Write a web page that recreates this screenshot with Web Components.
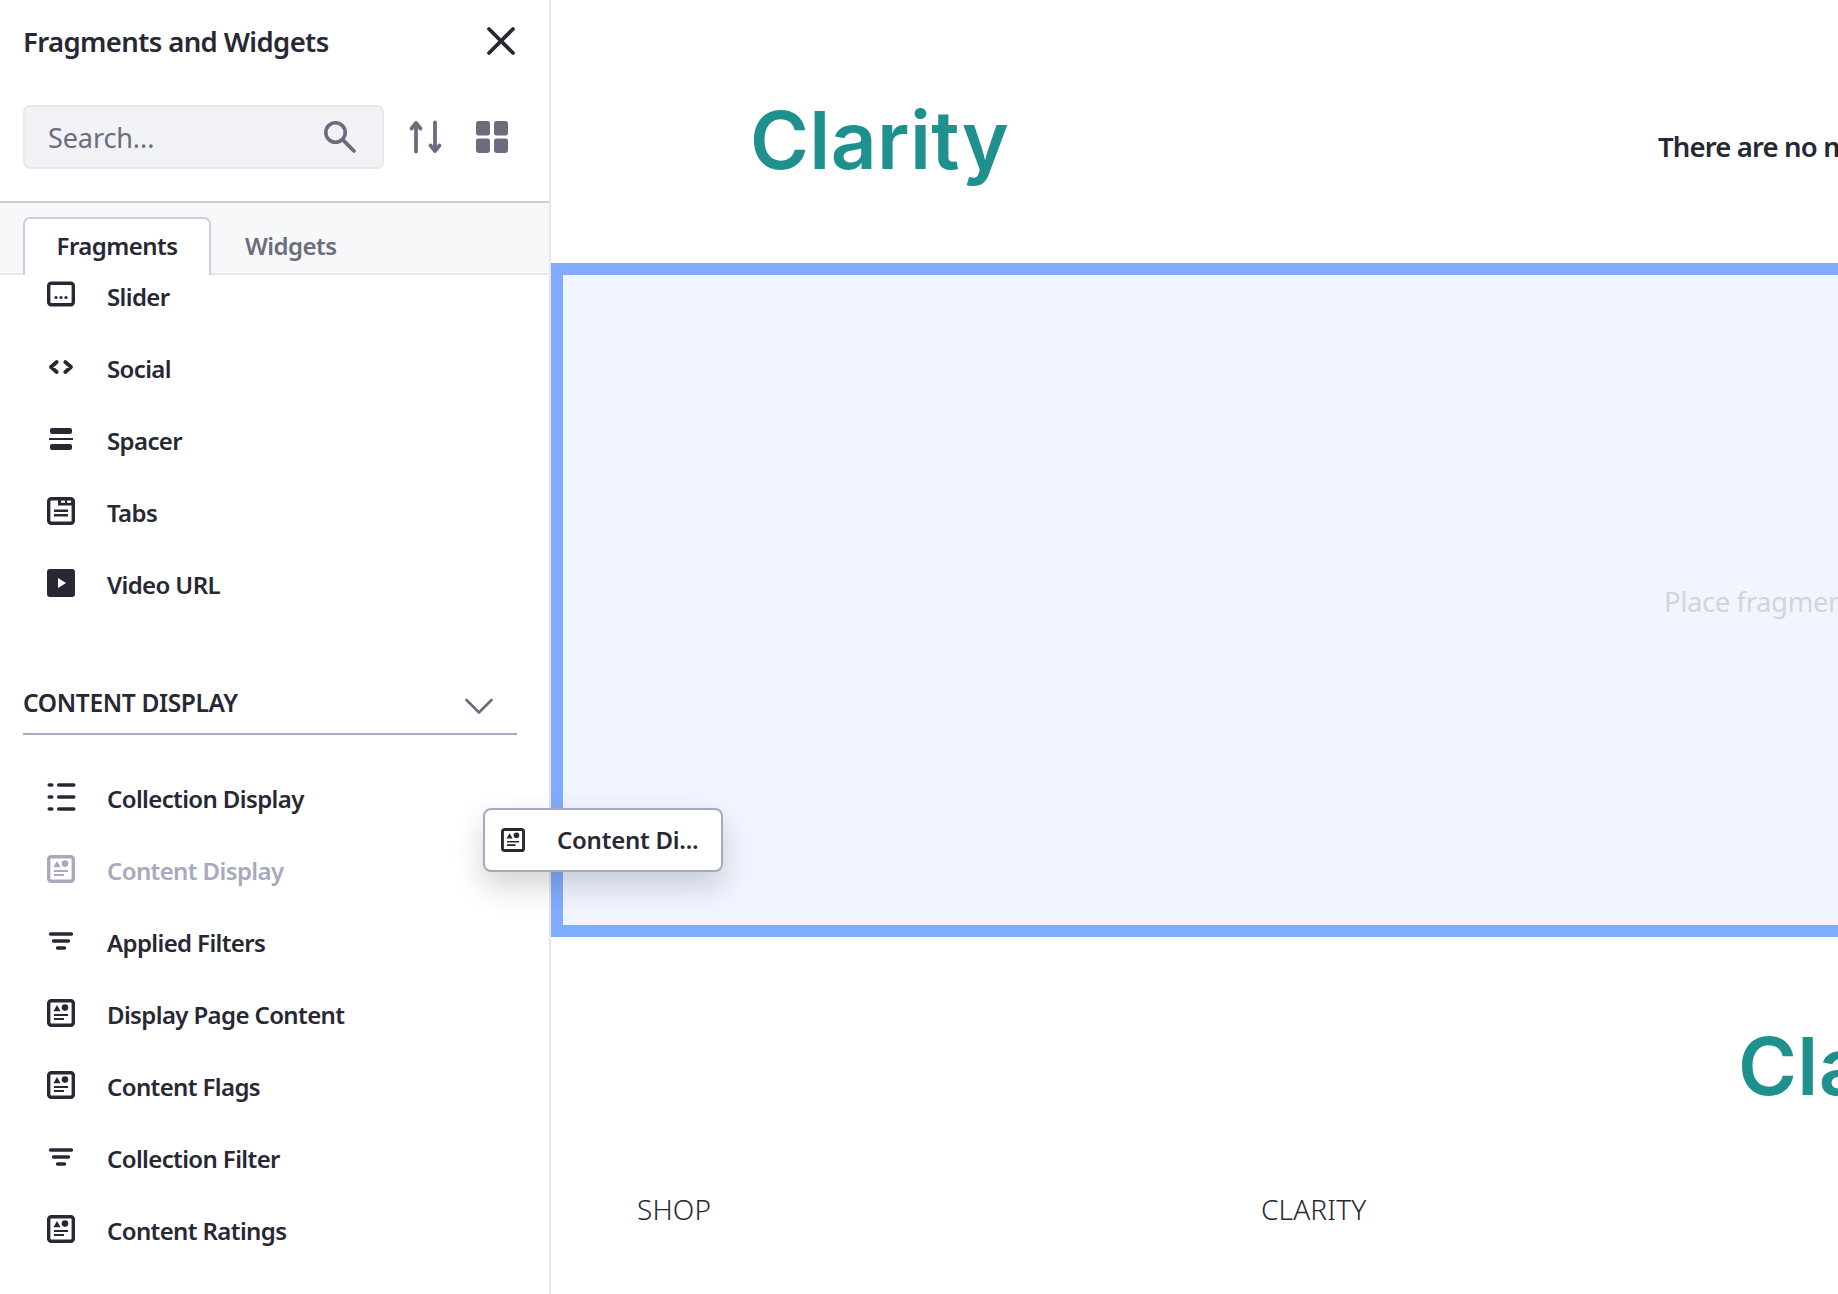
<!DOCTYPE html>
<html lang="en">
<head>
<meta charset="utf-8">
<title>Fragments and Widgets</title>
<style>
    html, body{
        margin: 0;
        height: 100%;
        overflow: hidden;
        background: #fff;
        color: #272833;
        font-family: "Noto Sans", "Liberation Sans", sans-serif;
    }
</style>
</head>
<body>
<page-editor></page-editor>

<script>
const ICONS = {
    close: `<path d="M2 2L26 26M26 2L2 26" fill="none" stroke="currentColor" stroke-width="3.8" stroke-linecap="round"/>`,
    search: `<circle cx="11.5" cy="11.5" r="9.7" fill="none" stroke="currentColor" stroke-width="3.6"/><path d="M18.6 18.6L30 30" fill="none" stroke="currentColor" stroke-width="3.8" stroke-linecap="round"/>`,
    sort: `<path d="M6 2V30.5M1.5 7.5L6 2L10.5 7.5M25 1.5V30M20.5 24.5L25 30L29.5 24.5" fill="none" stroke="currentColor" stroke-width="3.8" stroke-linecap="round" stroke-linejoin="round"/>`,
    grid: `<rect x="0" y="0" width="14" height="14.6" rx="2.4" fill="currentColor"/><rect x="18" y="0" width="14" height="14.6" rx="2.4" fill="currentColor"/><rect x="0" y="17.4" width="14" height="14.6" rx="2.4" fill="currentColor"/><rect x="18" y="17.4" width="14" height="14.6" rx="2.4" fill="currentColor"/>`,
    chevron: `<path d="M1.5 2L14 14.5L26.5 2" fill="none" stroke="currentColor" stroke-width="2.6" stroke-linecap="round" stroke-linejoin="round"/>`,
    slider: `<rect x="1.7" y="2.2" width="24.6" height="21.6" rx="2.5" fill="none" stroke="currentColor" stroke-width="3.4"/><circle cx="9" cy="16.5" r="1.6" fill="currentColor"/><circle cx="14" cy="16.5" r="1.6" fill="currentColor"/><circle cx="19" cy="16.5" r="1.6" fill="currentColor"/>`,
    social: `<path d="M9.7 9L4 14L9.7 19M18.3 9L24 14L18.3 19" fill="none" stroke="currentColor" stroke-width="3.8" stroke-linecap="round" stroke-linejoin="round"/>`,
    spacer: `<rect x="3" y="3" width="22" height="6" rx="2" fill="currentColor"/><rect x="2" y="13" width="24" height="2" fill="currentColor"/><rect x="3" y="19" width="22" height="6" rx="2" fill="currentColor"/>`,
    tabs: `<rect x="1.7" y="1.7" width="24.6" height="24.6" rx="2.5" fill="none" stroke="currentColor" stroke-width="3.4"/><rect x="11" y="2" width="15" height="6.5" fill="currentColor"/><rect x="14" y="3.6" width="4" height="2.2" fill="#fff"/><rect x="20" y="3.6" width="4" height="2.2" fill="#fff"/><path d="M7 13.7H21M7 18.3H21" stroke="currentColor" stroke-width="2.6"/>`,
    video: `<rect x="0" y="0" width="28" height="28" rx="3" fill="currentColor"/><path d="M11 9L19 14L11 19Z" fill="#fff"/>`,
    list: `<path d="M2.2 2H4.8M2.2 14H4.8M2.2 26H4.8M11.7 2H26.8M11.7 14H26.8M11.7 26H26.8" fill="none" stroke="currentColor" stroke-width="3.5" stroke-linecap="round"/>`,
    filter: `<path d="M3.5 7H24.5M6.5 14H21.5M10.5 21H17.5" fill="none" stroke="currentColor" stroke-width="3.4" stroke-linecap="round"/>`,
    doc: `<rect x="1.7" y="1.7" width="24.6" height="24.6" rx="2.5" fill="none" stroke="currentColor" stroke-width="3.4"/><path d="M10 6L13.6 12.2H6.4Z" fill="currentColor"/><circle cx="18" cy="8.6" r="3.3" fill="currentColor"/><path d="M7 16H21M7 20H17" stroke="currentColor" stroke-width="1.8"/>`
};

// viewBox per icon, most are on the 28 grid
const BOXES = {search: 32, sort: 32, grid: 32};

class FwIcon extends HTMLElement {
    constructor(){
        super();
        this.attachShadow({mode:'open'});
    }

    connectedCallback(){
        const name = this.getAttribute('name');
        const box = BOXES[name] || 28;
        const h = name === 'chevron' ? 16 : box;
        this.shadowRoot.innerHTML = `
            <style>
                :host{
                    display: inline-flex;
                    flex: none;
                    color: inherit;
                }
                svg{
                    display: block;
                    width: 100%;
                    height: 100%;
                    overflow: visible;
                }
            </style>
            <svg viewBox="0 0 ${box} ${h}" aria-hidden="true">${ICONS[name]}</svg>
        `
    }
}

class FwSearch extends HTMLElement {
    constructor(){
        super();
        this.attachShadow({mode:'open'});
        this.shadowRoot.innerHTML = `
            <style>
                :host{
                    display: flex;
                    align-items: center;
                    justify-content: space-between;
                    box-sizing: border-box;
                    width: 361px;
                    height: 64px;
                    padding: 0 26px 0 23px;
                    background: #f1f2f5;
                    border: 2px solid #e7e7ed;
                    border-radius: 7px;
                    color: #6b6c7e;
                }
                span{
                    font-size: 27px;
                    letter-spacing: -.1px;
                }
                fw-icon{
                    width: 32px;
                    height: 32px;
                }
            </style>
            <span>Search...</span>
            <fw-icon name="search"></fw-icon>
        `
    }
}

class FwTabs extends HTMLElement {
    constructor(){
        super();
        this.attachShadow({mode:'open'});
        this.shadowRoot.innerHTML = `
            <style>
                :host{
                    display: flex;
                    box-sizing: border-box;
                    height: 72px;
                    padding: 14px 0 0 23px;
                    background: #f7f8f9;
                    border-bottom: 2px solid #e7e7ed;
                    font-size: 24px;
                    font-weight: 600;
                    letter-spacing: -.55px;
                }
                div{
                    box-sizing: border-box;
                    height: 58px;
                    padding: 12px 0 0;
                    text-align: center;
                    color: #6b6c7e;
                }
                .active{
                    width: 188px;
                    margin-right: 34px;
                    background: #fff;
                    border: 2px solid #cdced9;
                    border-bottom: 0;
                    border-radius: 7px 7px 0 0;
                    color: #272833;
                    padding-top: 10px;
                }
            </style>
            <div class="active">Fragments</div>
            <div>Widgets</div>
        `
    }
}

class FwItem extends HTMLElement {
    constructor(){
        super();
        this.attachShadow({mode:'open'});
    }

    connectedCallback(){
        this.shadowRoot.innerHTML = `
            <style>
                :host{
                    display: flex;
                    align-items: center;
                    gap: 32px;
                    height: 72px;
                    padding-left: 47px;
                    color: #272833;
                    font-size: 24px;
                    font-weight: 600;
                    letter-spacing: -.62px;
                }
                :host([disabled]){
                    color: #a7a9bc;
                }
                fw-icon{
                    width: 28px;
                    height: 28px;
                }
                span{
                    position: relative;
                    top: 1px;
                }
            </style>
            <fw-icon name="${this.getAttribute('icon')}"></fw-icon>
            <span><slot></slot></span>
        `
    }
}

class FwSection extends HTMLElement {
    constructor(){
        super();
        this.attachShadow({mode:'open'});
        this.shadowRoot.innerHTML = `
            <style>
                :host{
                    display: block;
                    margin: 0 32px 26px 23px;
                    padding: 60px 0 0;
                    border-bottom: 2px solid #a7a9bc;
                }
                div{
                    display: flex;
                    align-items: center;
                    justify-content: space-between;
                    box-sizing: border-box;
                    height: 54px;
                    padding: 1px 24px 9px 0;
                    font-size: 24.5px;
                    font-weight: 600;
                    letter-spacing: -.35px;
                    color: #272833;
                }
                fw-icon{
                    width: 28px;
                    height: 16px;
                    color: #6b6c7e;
                    position: relative;
                    top: 4px;
                }
            </style>
            <div><span><slot></slot></span><fw-icon name="chevron"></fw-icon></div>
        `
    }
}

class FwSidebar extends HTMLElement {
    constructor(){
        super();
        this.attachShadow({mode:'open'});
        this.shadowRoot.innerHTML = `
            <style>
                :host{
                    display: flex;
                    flex-direction: column;
                    flex: none;
                    box-sizing: border-box;
                    width: 551px;
                    height: 100%;
                    border-right: 2px solid #e7e7ed;
                    background: #fff;
                }
                header{
                    box-sizing: border-box;
                    height: 203px;
                    padding: 0 34px 0 23px;
                    border-bottom: 2px solid #cdced9;
                }
                .title{
                    display: flex;
                    align-items: center;
                    justify-content: space-between;
                    height: 82px;
                    font-size: 27.5px;
                    font-weight: 600;
                    letter-spacing: -.62px;
                }
                .close{
                    width: 28px;
                    height: 28px;
                    color: #272833;
                }
                .tools{
                    display: flex;
                    align-items: center;
                    margin-top: 23px;
                    color: #6b6c7e;
                }
                .tools fw-icon{
                    width: 32px;
                    height: 32px;
                }
                .sort{
                    margin: 0 34px 0 26px;
                }
                .list{
                    flex: 1;
                    min-height: 0;
                    overflow: hidden;
                }
                .scroll{
                    margin-top: -16px;
                }
            </style>
            <header>
                <div class="title">
                    <span>Fragments and Widgets</span>
                    <fw-icon class="close" name="close"></fw-icon>
                </div>
                <div class="tools">
                    <fw-search></fw-search>
                    <fw-icon class="sort" name="sort"></fw-icon>
                    <fw-icon name="grid"></fw-icon>
                </div>
            </header>
            <fw-tabs></fw-tabs>
            <div class="list"><div class="scroll"><slot></slot></div></div>
        `
    }
}

class ClarityLogo extends HTMLElement {
    constructor(){
        super();
        this.attachShadow({mode:'open'});
        this.shadowRoot.innerHTML = `
            <style>
                :host{
                    display: block;
                    color: #1e908e;
                    font-family: "Inter", "Lato", "Liberation Sans", sans-serif;
                    font-size: 80px;
                    font-weight: 600;
                    line-height: 84px;
                    letter-spacing: .4px;
                    white-space: nowrap;
                }
            </style>
            <slot></slot>
        `
    }
}

class FwCanvas extends HTMLElement {
    constructor(){
        super();
        this.attachShadow({mode:'open'});
        this.shadowRoot.innerHTML = `
            <style>
                :host{
                    display: flex;
                    flex-direction: column;
                    flex: 1;
                    min-width: 0;
                    height: 100%;
                    overflow: hidden;
                    background: #fff;
                    white-space: nowrap;
                }
                .top{
                    display: grid;
                    grid-template-columns: 908px 1fr;
                    align-items: start;
                    height: 263px;
                    padding-left: 199px;
                    box-sizing: border-box;
                }
                .top clarity-logo{
                    margin-top: 98px;
                }
                .nav{
                    margin-top: 128px;
                    font-size: 27.5px;
                    font-weight: 600;
                    letter-spacing: -.85px;
                }
                .drop{
                    box-sizing: border-box;
                    height: 674px;
                    border: 12px solid #80acff;
                    border-right: 0;
                    background: #f0f5ff;
                    padding: 308px 0 0 1101px;
                    color: #d3d4df;
                    font-size: 27.5px;
                    letter-spacing: -.4px;
                }
                .bottom{
                    display: grid;
                    grid-template-columns: 624px 477px 1fr;
                    padding-left: 86px;
                }
                .bottom clarity-logo{
                    margin-top: 87px;
                }
                .col{
                    margin-top: 253px;
                    font-size: 28px;
                    font-weight: 300;
                    letter-spacing: .15px;
                }
            </style>
            <div class="top">
                <clarity-logo>Clarity</clarity-logo>
                <div class="nav">There are no m</div>
            </div>
            <div class="drop">Place fragmen</div>
            <div class="bottom">
                <div class="col">SHOP</div>
                <div class="col">CLARITY</div>
                <clarity-logo>Clarity</clarity-logo>
            </div>
        `
    }
}

// the card that follows the cursor while dragging a fragment
class FwDragCard extends HTMLElement {
    constructor(){
        super();
        this.attachShadow({mode:'open'});
        this.shadowRoot.innerHTML = `
            <style>
                :host{
                    position: absolute;
                    left: 483px;
                    top: 808px;
                    display: flex;
                    align-items: center;
                    gap: 32px;
                    box-sizing: border-box;
                    width: 240px;
                    height: 64px;
                    padding: 0 0 0 16px;
                    background: #fff;
                    border: 2px solid #a7a9bc;
                    border-radius: 8px;
                    box-shadow: 0 14px 30px rgba(39, 40, 51, .2);
                    color: #272833;
                    font-size: 24px;
                    font-weight: 600;
                    letter-spacing: -.25px;
                    white-space: nowrap;
                }
                fw-icon{
                    width: 24px;
                    height: 24px;
                }
                span{
                    position: relative;
                    top: -1px;
                }
            </style>
            <fw-icon name="doc"></fw-icon>
            <span>Content Di...</span>
        `
    }
}

class PageEditor extends HTMLElement {
    constructor(){
        super();
        this.attachShadow({mode:'open'});
        this.shadowRoot.innerHTML = `
            <style>
                :host{
                    display: flex;
                    position: relative;
                    width: 100%;
                    height: 100vh;
                    overflow: hidden;
                }
            </style>
            <fw-sidebar>
                <fw-item icon="slider">Slider</fw-item>
                <fw-item icon="social">Social</fw-item>
                <fw-item icon="spacer">Spacer</fw-item>
                <fw-item icon="tabs">Tabs</fw-item>
                <fw-item icon="video">Video URL</fw-item>
                <fw-section>CONTENT DISPLAY</fw-section>
                <fw-item icon="list">Collection Display</fw-item>
                <fw-item icon="doc" disabled>Content Display</fw-item>
                <fw-item icon="filter">Applied Filters</fw-item>
                <fw-item icon="doc">Display Page Content</fw-item>
                <fw-item icon="doc">Content Flags</fw-item>
                <fw-item icon="filter">Collection Filter</fw-item>
                <fw-item icon="doc">Content Ratings</fw-item>
            </fw-sidebar>
            <fw-canvas></fw-canvas>
            <fw-drag-card></fw-drag-card>
        `
    }
}

customElements.define('fw-icon', FwIcon);
customElements.define('fw-search', FwSearch);
customElements.define('fw-tabs', FwTabs);
customElements.define('fw-item', FwItem);
customElements.define('fw-section', FwSection);
customElements.define('fw-sidebar', FwSidebar);
customElements.define('clarity-logo', ClarityLogo);
customElements.define('fw-canvas', FwCanvas);
customElements.define('fw-drag-card', FwDragCard);
customElements.define('page-editor', PageEditor);
</script>
</body>
</html>
